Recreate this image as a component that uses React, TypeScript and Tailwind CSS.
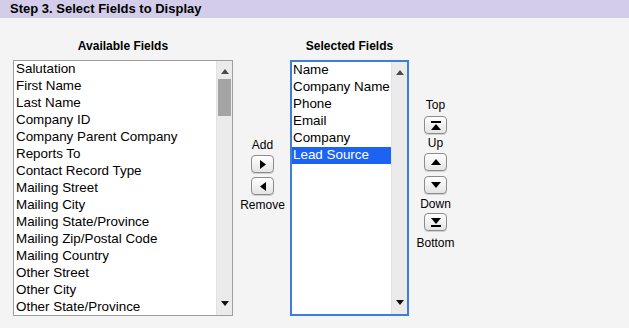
import React from "react";

const available = [
  "Salutation",
  "First Name",
  "Last Name",
  "Company ID",
  "Company Parent Company",
  "Reports To",
  "Contact Record Type",
  "Mailing Street",
  "Mailing City",
  "Mailing State/Province",
  "Mailing Zip/Postal Code",
  "Mailing Country",
  "Other Street",
  "Other City",
  "Other State/Province",
];

const selected = ["Name", "Company Name", "Phone", "Email", "Company", "Lead Source"];

function UpArrow() {
  return (
    <svg width="8" height="5" viewBox="0 0 8 5">
      <path d="M0 5 L4 0 L8 5 Z" fill="#4a4a4a" />
    </svg>
  );
}
function DownArrow() {
  return (
    <svg width="8" height="5" viewBox="0 0 8 5">
      <path d="M0 0 L4 5 L8 0 Z" fill="#111" />
    </svg>
  );
}

function Scrollbar({ thumb }: { thumb: boolean }) {
  return (
    <div className="w-[16px] bg-[#ebebeb] border-l border-[#e2e2e2] flex flex-col items-center">
      <div className="h-[18px] flex items-center justify-center pt-[2px]">
        <UpArrow />
      </div>
      {thumb ? <div className="w-[13px] h-[37px] bg-[#a4a4a4]" /> : null}
      <div className="flex-1" />
      <div className="h-[22px] flex items-center justify-center pb-[2px]">
        <DownArrow />
      </div>
    </div>
  );
}

function Btn({ children }: { children: React.ReactNode }) {
  return (
    <div className="w-[23px] h-[18px] rounded-[4px] border border-[#8c8c8c] bg-gradient-to-b from-white to-[#e4e4e4] flex items-center justify-center shadow-[0_1px_0_#d0d0d0]">
      {children}
    </div>
  );
}

export default function App() {
  return (
    <div
      className="w-[629px] h-[328px] bg-[#f4f4f4] text-black overflow-hidden"
      style={{ fontFamily: '"Liberation Sans", Arial, Helvetica, sans-serif' }}
    >
      <div className="h-[18px] bg-[#d3cdea] pl-[10px] text-[13px] font-bold leading-[17px]">
        Step 3. Select Fields to Display
      </div>
      <div className="flex pl-[13px] mt-[20px]">
        {/* Available */}
        <div className="w-[220px] flex flex-col">
          <div className="h-[16px] text-center text-[12px] font-bold leading-[16px]">Available Fields</div>
          <div className="mt-[6px] h-[256px] bg-white border border-[#9d9d9d] flex overflow-hidden">
            <div className="flex-1 overflow-hidden pl-[2px]">
              {available.map((f) => (
                <div key={f} className="h-[17px] text-[13.4px] leading-[16px] whitespace-nowrap">
                  {f}
                </div>
              ))}
            </div>
            <Scrollbar thumb />
          </div>
        </div>

        {/* Add / Remove */}
        <div className="w-[57px] flex flex-col items-center pt-[100px] text-[12px] leading-[14px]">
          <div className="h-[14px] ml-[2px]">Add</div>
          <div className="mt-[3px] ml-[2px]">
            <Btn>
              <svg width="6" height="9" viewBox="0 0 6 9">
                <path d="M0 0 L6 4.5 L0 9 Z" fill="#000" />
              </svg>
            </Btn>
          </div>
          <div className="mt-[4px] ml-[2px]">
            <Btn>
              <svg width="6" height="9" viewBox="0 0 6 9">
                <path d="M6 0 L0 4.5 L6 9 Z" fill="#000" />
              </svg>
            </Btn>
          </div>
          <div className="h-[14px] mt-[3px] ml-[2px]">Remove</div>
        </div>

        {/* Selected */}
        <div className="w-[119px] flex flex-col">
          <div className="h-[16px] text-center text-[12px] font-bold leading-[16px]">Selected Fields</div>
          <div className="mt-[6px] h-[256px] bg-white border-2 border-[#3c7ddf] flex overflow-hidden">
            <div className="flex-1 overflow-hidden">
              {selected.map((f) => (
                <div
                  key={f}
                  className={
                    "h-[17px] text-[13.4px] leading-[16px] whitespace-nowrap pl-[1px] " +
                    (f === "Lead Source" ? "bg-[#1c62f3] text-white" : "")
                  }
                >
                  {f}
                </div>
              ))}
            </div>
            <Scrollbar thumb={false} />
          </div>
        </div>

        {/* Order buttons */}
        <div className="w-[53px] flex flex-col items-center pt-[60px] text-[12px] leading-[14px]">
          <div className="h-[14px]">Top</div>
          <div className="mt-[4px]">
            <Btn>
              <svg width="10" height="9" viewBox="0 0 10 9">
                <rect x="0" y="0" width="10" height="2" fill="#000" />
                <path d="M0 9 L5 3 L10 9 Z" fill="#000" />
              </svg>
            </Btn>
          </div>
          <div className="h-[14px] mt-[2px]">Up</div>
          <div className="mt-[3px]">
            <Btn>
              <svg width="10" height="6" viewBox="0 0 10 6">
                <path d="M0 6 L5 0 L10 6 Z" fill="#000" />
              </svg>
            </Btn>
          </div>
          <div className="mt-[5px]">
            <Btn>
              <svg width="10" height="6" viewBox="0 0 10 6">
                <path d="M0 0 L5 6 L10 0 Z" fill="#000" />
              </svg>
            </Btn>
          </div>
          <div className="h-[14px] mt-[3px]">Down</div>
          <div className="mt-[2px]">
            <Btn>
              <svg width="10" height="9" viewBox="0 0 10 9">
                <path d="M0 0 L5 6 L10 0 Z" fill="#000" />
                <rect x="0" y="7" width="10" height="2" fill="#000" />
              </svg>
            </Btn>
          </div>
          <div className="h-[14px] mt-[5px]">Bottom</div>
        </div>
      </div>
    </div>
  );
}
